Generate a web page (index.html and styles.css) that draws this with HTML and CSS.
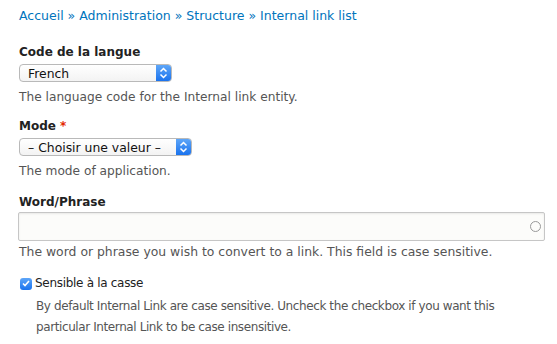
FILE: index.html
```html
<!DOCTYPE html>
<html lang="fr">
<head>
    <meta charset="UTF-8">
    <meta name="viewport" content="width=device-width, initial-scale=1.0">
    <title>Internal link</title>
    <link rel="stylesheet" href="styles.css">
</head>
<body>
    <nav class="breadcrumb">
        <a href="#">Accueil</a> » <a href="#">Administration</a> » <a href="#">Structure</a> » <a href="#">Internal link list</a>
    </nav>

    <form class="form">
        <div class="form-item">
            <label class="form-label">Code de la langue</label>
            <div class="select select-lang">
                <span class="select-value">French</span>
                <span class="select-arrow">
                    <svg width="9" height="12" viewBox="0 0 9 12"><path d="M1.5 4.5 L4.5 1.5 L7.5 4.5 M1.5 7.5 L4.5 10.5 L7.5 7.5" fill="none" stroke="#fff" stroke-width="1.5"/></svg>
                </span>
            </div>
            <div class="description">The language code for the Internal link entity.</div>
        </div>

        <div class="form-item">
            <label class="form-label">Mode <span class="required">*</span></label>
            <div class="select select-mode">
                <span class="select-value">– Choisir une valeur –</span>
                <span class="select-arrow">
                    <svg width="9" height="12" viewBox="0 0 9 12"><path d="M1.5 4.5 L4.5 1.5 L7.5 4.5 M1.5 7.5 L4.5 10.5 L7.5 7.5" fill="none" stroke="#fff" stroke-width="1.5"/></svg>
                </span>
            </div>
            <div class="description">The mode of application.</div>
        </div>

        <div class="form-item item-text">
            <label class="form-label label-text">Word/Phrase</label>
            <div class="text-input">
                <span class="throbber"></span>
            </div>
            <div class="description desc-text">The word or phrase you wish to convert to a link. This field is case sensitive.</div>
        </div>

        <div class="form-item form-checkbox">
            <div class="checkbox-row">
                <span class="checkbox">
                    <svg width="8" height="7" viewBox="0 0 8 7"><path d="M1 3.5 L3 5.5 L7 1" fill="none" stroke="#fff" stroke-width="1.6"/></svg>
                </span>
                <label>Sensible à la casse</label>
            </div>
            <div class="description indent">By default Internal Link are case sensitive. Uncheck the checkbox if you want this particular Internal Link to be case insensitive.</div>
        </div>
    </form>
</body>
</html>
```

FILE: styles.css
```css
body {
    margin: 0;
    padding: 8px 12px 0 19px;
    font-family: 'DejaVu Sans', Verdana, sans-serif;
    font-size: 12.4px;
    line-height: 15px;
    color: #333;
    background-color: white;
}
.breadcrumb {
    font-size: 12.5px;
    line-height: 16px;
    color: #0074bd;
    margin-bottom: 21px;
}
.breadcrumb a {
    color: #0074bd;
    text-decoration: none;
}
.form-item {
    margin-bottom: 14px;
}
.item-text {
    margin-top: 16px;
}
.form-label {
    display: block;
    font-size: 12px;
    font-weight: bold;
    color: #222;
    margin-bottom: 4px;
}
.label-text {
    margin-bottom: 2px;
}
.required {
    color: #e32700;
}
.select {
    display: flex;
    align-items: center;
    height: 16px;
    border: 1px solid #b9b9b9;
    border-radius: 4px;
    background: linear-gradient(#fff, #f3f3f3);
    overflow: hidden;
}
.select-lang {
    width: 151px;
}
.select-mode {
    width: 171px;
}
.select-value {
    flex: 1;
    padding-left: 8px;
    color: #111;
}
.select-arrow {
    width: 15px;
    height: 16px;
    display: flex;
    align-items: center;
    justify-content: center;
    background: linear-gradient(#5ea6f8, #1a73ee);
}
.description {
    margin-top: 8px;
    font-size: 12.2px;
    color: #555;
}
.desc-text {
    margin-top: 3px;
    font-size: 12.4px;
}
.text-input {
    display: flex;
    align-items: center;
    justify-content: flex-end;
    height: 27px;
    margin-left: -1px;
    border: 1px solid #c6c6c6;
    border-radius: 2px;
    background-color: #fcfcfa;
    box-shadow: inset 0 1px 2px rgba(0,0,0,0.08);
}
.throbber {
    width: 9px;
    height: 9px;
    border: 1.5px solid #999;
    border-radius: 50%;
    margin-right: 3px;
}
.form-checkbox {
    margin-top: 17px;
}
.checkbox-row {
    display: flex;
    align-items: center;
    gap: 3px;
    font-size: 12px;
    letter-spacing: -0.3px;
    color: #222;
}
.checkbox {
    width: 12px;
    height: 12px;
    margin-left: 1px;
    border-radius: 3px;
    background: linear-gradient(#5ea6f8, #1a73ee);
    display: flex;
    align-items: center;
    justify-content: center;
}
.indent {
    margin-left: 17px;
    margin-top: 5px;
    font-size: 12px;
    letter-spacing: -0.4px;
    line-height: 21px;
}
```
